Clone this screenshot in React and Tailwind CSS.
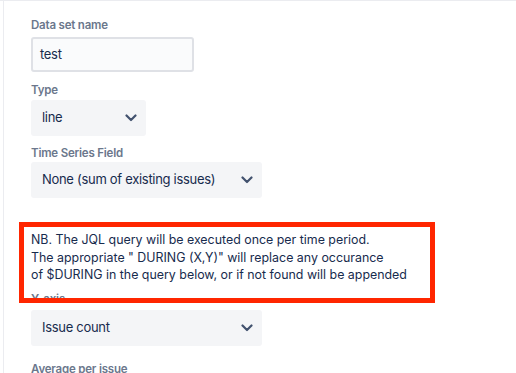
import React from 'react';

function Chevron() {
  return (
    <svg width="12" height="8" viewBox="0 0 12 8" className="shrink-0">
      <path d="M1.5 1.5 L6 6 L10.5 1.5" fill="none" stroke="#42526e" strokeWidth="2.2" strokeLinecap="round" strokeLinejoin="round" />
    </svg>
  );
}

function Label({ children }) {
  return <div className="text-[11.5px] leading-[16px] font-semibold tracking-[-0.2px] text-[#6b778c]">{children}</div>;
}

function Select({ value, width }) {
  return (
    <div className={`${width} h-[36px] rounded-[3px] bg-[#f4f5f7] flex items-center justify-between pl-[11px] pr-[9px] text-[13px] tracking-[-0.3px] text-[#172b4d]`}>
      <span>{value}</span>
      <Chevron />
    </div>
  );
}

export default function App() {
  return (
    <div className="w-[516px] h-[373px] overflow-hidden bg-white relative border-t border-[#ebecf0]" style={{ fontFamily: 'Inter, "Noto Sans", sans-serif' }}>
      <div className="ml-[3px] h-full border-l border-[#ebecf0] pl-[27px] pt-[16px]">
        <Label>Data set name</Label>
        <div className="mt-[4px] w-[163px] h-[35px] rounded-[3px] border-2 border-[#dfe1e6] bg-[#fafbfc] flex items-center pl-[7px] text-[13px] tracking-[-0.3px] text-[#172b4d]">
          test
        </div>
        <div className="mt-[10px]"><Label>Type</Label></div>
        <div className="mt-[2px]"><Select value="line" width="w-[115px]" /></div>
        <div className="mt-[9px]"><Label>Time Series Field</Label></div>
        <div className="mt-[1px]"><Select value="None (sum of existing issues)" width="w-[231px]" /></div>
        <div className="mt-[33px] text-[12.4px] leading-[17.5px] text-[#172b4d]">
          <div>NB. The JQL query will be executed once per time period.</div>
          <div>The appropriate " DURING (X,Y)" will replace any occurance</div>
          <div>of $DURING in the query below, or if not found will be appended</div>
        </div>
        <div className="mt-[7px]"><Label>Y-axis</Label></div>
        <div className="mt-[3px]"><Select value="Issue count" width="w-[231px]" /></div>
        <div className="mt-[15px]"><Label>Average per issue</Label></div>
      </div>
      <div className="absolute left-[19px] top-[221px] w-[416px] h-[81px] border-[5px] border-[#ff2600]" />
    </div>
  );
}
